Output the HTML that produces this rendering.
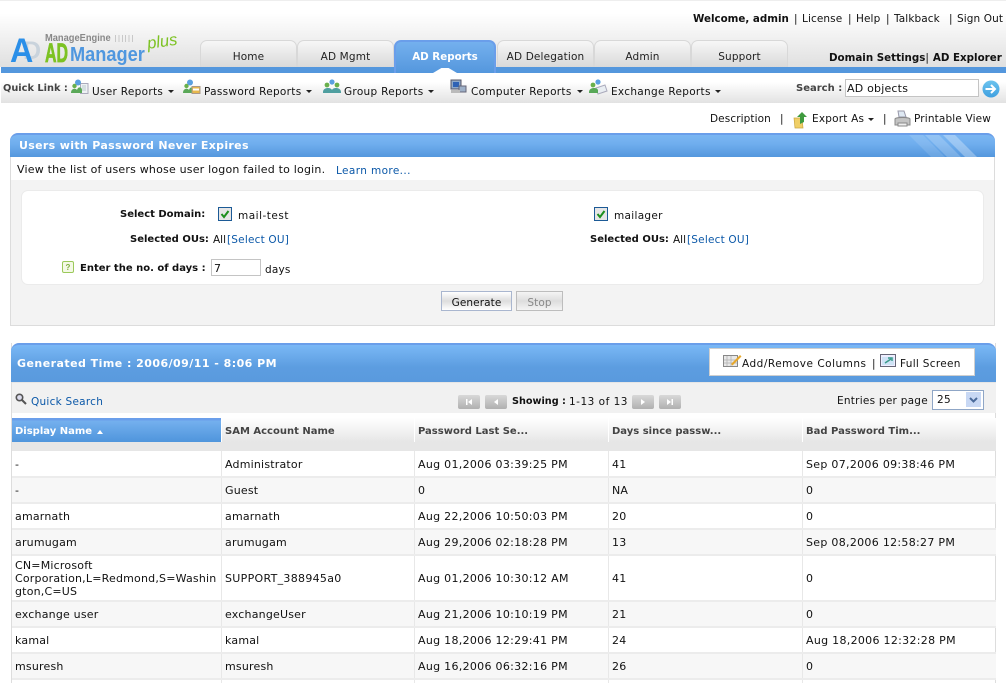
<!DOCTYPE html>
<html><head><meta charset="utf-8"><title>ADManager Plus</title>
<style>
html,body{margin:0;padding:0;background:#fff;width:1006px;height:683px;overflow:hidden}
body{position:relative;font-family:"DejaVu Sans","Liberation Sans",sans-serif;font-size:11px;letter-spacing:.2px;color:#111}
.a{position:absolute}
.t{position:absolute;white-space:nowrap;line-height:14px;margin-top:1px}
.s{font-size:10.5px;letter-spacing:.3px}
.d{letter-spacing:.3px}
b,.b{font-weight:bold;font-size:10px;letter-spacing:0}
.lg{font-family:"Liberation Sans",sans-serif;font-weight:bold;letter-spacing:0;position:absolute;white-space:nowrap;transform-origin:0 0}
.l{color:#0b58a8}
.tab{position:absolute;top:40px;height:27px;box-sizing:border-box;border:1px solid #d8d8d8;border-bottom:0;border-radius:7px 7px 0 0;background:linear-gradient(#f7f7f7,#d9d9d9);text-align:center;line-height:33px;color:#222;font-size:10.5px;letter-spacing:.15px}
.tab.on{background:linear-gradient(#74b0ee,#5497dd);border:2px solid #6a9eea;border-bottom:0;color:#fff;font-weight:bold;font-size:10.3px;letter-spacing:0;line-height:31px;height:33px}
.ar{position:absolute;width:0;height:0;border-left:3px solid transparent;border-right:3px solid transparent;border-top:3px solid #222}
.th{position:absolute;top:418px;height:24px;background:linear-gradient(#fff,#e6e6e6);color:#444;font-weight:bold;font-size:10px;letter-spacing:0;line-height:27px;padding-left:3px;box-sizing:border-box;white-space:nowrap}
.pg{position:absolute;top:395px;width:22px;height:14px;border-radius:2px;background:linear-gradient(#d8d8d8,#b0b0b0)}
.hl{position:absolute;left:12px;width:984px;height:2px;background:#ececec}
.vl{position:absolute;top:451px;width:1px;height:232px;background:#e8e8e8}
.row{position:absolute;left:12px;width:984px;background:#f7f7f7}
.cb{position:absolute;width:12px;height:12px;border:1px solid #1c5a96;background:#e6e6e6}
</style></head><body>

<div class="a" style="left:0;top:0;width:1006px;height:67px;background:linear-gradient(#fff 20%,#e0e0e0)"></div>
<div class="a" style="left:0;top:0;width:1006px;height:1px;background:#eee"></div>
<div class="a" style="left:1px;top:67px;width:1005px;height:6px;background:#5497dd"></div>
<div class="a" style="left:1px;top:73px;width:1005px;height:30px;background:linear-gradient(#fff 30%,#e2e2e2)"></div>

<!-- logo -->
<div class="lg" style="left:45px;top:32px;line-height:14px;font-size:10px;color:#888;transform:scaleX(.93)">ManageEngine</div>
<div class="a" style="left:115px;top:35px;width:20px;height:7px;background:repeating-linear-gradient(90deg,#c8c8c8 0,#c8c8c8 1px,transparent 1px,transparent 3.4px)"></div>
<div class="lg" style="left:23px;top:40px;line-height:22px;font-size:25px;color:#c9d3dc">D</div>
<div class="lg" style="left:10px;top:39px;line-height:24px;font-size:34px;color:#2b8fe8;transform:scaleX(.95)">A</div>
<div class="lg" style="left:45px;top:42px;line-height:22px;font-size:27px;color:#7cc222;transform:scaleX(.59);-webkit-text-stroke:.8px #7cc222">AD</div>
<div class="lg" style="left:70px;top:44px;line-height:22px;font-size:20px;color:#4f97df;transform:scaleX(.91)">Manager</div>
<div class="lg" style="left:146px;top:35px;line-height:18px;font-size:16.5px;font-weight:normal;font-style:italic;color:#7cc222;transform:rotate(-8deg)">plus</div>

<!-- tabs -->
<div class="tab" style="left:200px;width:97px">Home</div>
<div class="tab" style="left:297px;width:97px">AD Mgmt</div>
<div class="tab" style="left:594px;width:97px">Admin</div>
<div class="tab" style="left:691px;width:97px">Support</div>
<div class="tab" style="left:497px;width:97px">AD Delegation</div>
<div class="tab on" style="left:394px;width:102px">AD Reports</div>
<div class="a" style="left:433px;top:68px;width:24px;height:5px;background:#fff;clip-path:polygon(0 100%,35% 0,65% 0,100% 100%)"></div>

<div class="t" style="left:693px;top:11px"><b style="font-size:10.3px">Welcome, admin</b></div>
<div class="t s" style="left:794px;top:11px">|</div>
<div class="t s" style="left:802px;top:11px;letter-spacing:.1px">License</div>
<div class="t s" style="left:848px;top:11px">|</div>
<div class="t s" style="left:856px;top:11px;letter-spacing:.1px">Help</div>
<div class="t s" style="left:886px;top:11px">|</div>
<div class="t s" style="left:894px;top:11px;letter-spacing:.1px">Talkback</div>
<div class="t s" style="left:949px;top:11px">|</div>
<div class="t s" style="left:957px;top:11px;letter-spacing:.1px">Sign Out</div>
<div class="t" style="left:829px;top:50px"><b style="font-size:10.3px">Domain Settings</b><span class="s">|</span> <b style="font-size:10.3px">AD Explorer</b></div>

<!-- quick links -->
<div class="t b" style="left:3px;top:81px;color:#444;font-size:9.8px">Quick Link :</div>
<svg class="a" style="left:71px;top:79px" width="18" height="16" viewBox="0 0 18 16"><rect x="9.500" y="4.500" width="7.500" height="10" fill="#eef1f4" stroke="#aab"/><path d="M11 7h4M11 9h4M11 11h4" stroke="#bcc"/><circle cx="7" cy="3.500" r="3" fill="#5aa0e0"/><circle cx="3.500" cy="7" r="2.200" fill="#6ab04c"/><path d="M0 14c0-5 5-5 6-3 1-4 5-3 5 0v3z" fill="#5aa858"/></svg>
<div class="t s" style="left:92px;top:84px">User Reports</div><div class="ar" style="left:168px;top:90px"></div>
<svg class="a" style="left:183px;top:79px" width="18" height="16" viewBox="0 0 18 16"><circle cx="7" cy="3.500" r="3" fill="#5aa0e0"/><circle cx="3.500" cy="7" r="2.200" fill="#6ab04c"/><path d="M0 14c0-5 5-5 6-3 1-4 5-3 5 0v3z" fill="#5aa858"/><rect x="9" y="7.500" width="8" height="7" fill="#e8b84c" stroke="#a98"/><rect x="10" y="9.500" width="6" height="2" fill="#fff"/></svg>
<div class="t s" style="left:204px;top:84px">Password Reports</div><div class="ar" style="left:306px;top:90px"></div>
<svg class="a" style="left:323px;top:79px" width="18" height="15" viewBox="0 0 18 15"><circle cx="9" cy="3" r="2.600" fill="#5aa0e0"/><circle cx="4" cy="6" r="2.400" fill="#6ab04c"/><circle cx="14" cy="6" r="2.400" fill="#6ab04c"/><path d="M0 13c0-5 8-5 9-2 1-3 9-3 9 2v1H0z" fill="#4f9fa0"/></svg>
<div class="t s" style="left:344px;top:84px">Group Reports</div><div class="ar" style="left:428px;top:90px"></div>
<svg class="a" style="left:450px;top:79px" width="17" height="16" viewBox="0 0 17 16"><rect x="1" y="1" width="10" height="9" fill="#8fa9c9" stroke="#556"/><rect x="3" y="3" width="6" height="5" fill="#2f62b5"/><rect x="9" y="7" width="7" height="6" fill="#9db0c8" stroke="#667"/><rect x="1" y="11" width="9" height="3" fill="#bbb"/></svg>
<div class="t s" style="left:471px;top:84px">Computer Reports</div><div class="ar" style="left:577px;top:90px"></div>
<svg class="a" style="left:589px;top:79px" width="19" height="16" viewBox="0 0 19 16"><path d="M7 9l9-3 2 6-9 3z" fill="#e8edf2" stroke="#aab"/><circle cx="9" cy="3" r="2.600" fill="#5aa0e0"/><circle cx="4" cy="6" r="2.400" fill="#6ab04c"/><path d="M0 13c0-5 8-5 9-2v3H0z" fill="#58a858"/></svg>
<div class="t s" style="left:611px;top:84px">Exchange Reports</div><div class="ar" style="left:715px;top:90px"></div>

<div class="t b" style="left:796px;top:81px;color:#444;">Search :</div>
<div class="a" style="left:845px;top:79px;width:132px;height:16px;border:1px solid #c4c4c4;background:#fff;line-height:17px;text-indent:1px">AD objects</div>
<svg class="a" style="left:982px;top:80px" width="18" height="18" viewBox="0 0 18 18"><defs><linearGradient id="g" x1="0" y1="0" x2="0" y2="1"><stop offset="0" stop-color="#6cc3ee"/><stop offset="1" stop-color="#3fa0e0"/></linearGradient></defs><circle cx="9" cy="9" r="8.500" fill="url(#g)"/><path d="M3.500 9h9M9 5l4 4-4 4" fill="none" stroke="#fff" stroke-width="2"/></svg>

<!-- actions -->
<div class="t s" style="left:710px;top:111px;letter-spacing:.1px">Description</div>
<div class="t s" style="left:780px;top:111px">|</div>
<svg class="a" style="left:793px;top:111px" width="15" height="18" viewBox="0 0 15 18"><path d="M1 7h8l1 10H2z" fill="#f0cf66" stroke="#c9a640" stroke-width=".7"/><path d="M7 13V6H4l5-5 5 5h-3v5z" fill="#3f9b3f"/></svg>
<div class="t s" style="left:812px;top:111px;letter-spacing:.2px">Export As</div><div class="ar" style="left:868px;top:118px"></div>
<div class="t s" style="left:883px;top:111px">|</div>
<svg class="a" style="left:894px;top:110px" width="17" height="18" viewBox="0 0 17 18"><path d="M4 1h6l2 6H5z" fill="#dfe9f3" stroke="#99a"/><path d="M1 9c0-2 15-2 15 0v6H1z" fill="#c4c4c4" stroke="#888"/><rect x="4" y="13" width="9" height="3" fill="#eee" stroke="#888"/></svg>
<div class="t s" style="left:914px;top:111px;letter-spacing:.15px">Printable View</div>

<!-- panel -->
<div class="a" style="left:10px;top:133px;width:985px;height:193px;box-sizing:border-box;border:1px solid #dcdcdc;border-top:0;background:#f3f3f3;border-radius:8px 8px 0 0"></div>
<div class="a" style="left:10px;top:133px;width:985px;height:24px;box-sizing:border-box;border-top:2px solid #6a9eea;border-radius:8px 8px 0 0;background:linear-gradient(#7ab6f2 0,#70aeee 40%,#5497dd 100%);overflow:hidden">
<svg class="a" style="right:-12px;top:-2px" width="100" height="24" viewBox="0 0 100 24"><path d="M2 2h14l22 22H24z" fill="#fff" opacity=".12"/><path d="M18 2h14l22 22H40z" fill="#fff" opacity=".2"/><path d="M36 2h12l22 22H58z" fill="#fff" opacity=".3"/></svg></div>
<div class="a" style="left:11px;top:157px;width:983px;height:23px;background:#fff"></div>
<div class="t b" style="left:19px;top:138px;color:#fff;font-size:11px;letter-spacing:.33px">Users with Password Never Expires</div>
<div class="t" style="left:17px;top:162px">View the list of users whose user logon failed to login.</div>
<div class="t s l" style="left:336px;top:163px;letter-spacing:.38px">Learn more...</div>
<div class="a" style="left:21px;top:190px;width:963px;height:95px;box-sizing:border-box;background:#fff;border:1px solid #ebebeb;border-radius:7px"></div>

<div class="t b" style="left:120px;top:207px">Select Domain:</div>
<div class="cb" style="left:218px;top:207px"></div>
<svg class="a" style="left:219px;top:208px" width="12" height="12" viewBox="0 0 12 12"><path d="M2.500 6l2.500 3 4.500-6" fill="none" stroke="#1d8f1d" stroke-width="2"/></svg>
<div class="t s" style="left:238px;top:208px;letter-spacing:.5px">mail-test</div>
<div class="t b" style="left:130px;top:232px">Selected OUs:</div>
<div class="t s" style="left:213px;top:232px;letter-spacing:0">All</div>
<div class="t s l" style="left:227px;top:232px;letter-spacing:.2px">[Select OU]</div>
<svg class="a" style="left:62px;top:261px" width="12" height="12" viewBox="0 0 12 12"><rect x=".5" y=".5" width="11" height="11" rx="1.500" fill="#f4f9e6" stroke="#9bc95a"/><text x="6" y="9" font-size="8" font-weight="bold" text-anchor="middle" fill="#7fae3e" font-family="Liberation Sans">?</text></svg>
<div class="t b" style="left:80px;top:261px">Enter the no. of days :</div>
<div class="a" style="left:211px;top:259px;width:48px;height:15px;border:1px solid #c4c4c4;background:#fff;line-height:17px;text-indent:2px">7</div>
<div class="t s" style="left:265px;top:262px;letter-spacing:.2px">days</div>

<div class="cb" style="left:594px;top:207px"></div>
<svg class="a" style="left:595px;top:208px" width="12" height="12" viewBox="0 0 12 12"><path d="M2.500 6l2.500 3 4.500-6" fill="none" stroke="#1d8f1d" stroke-width="2"/></svg>
<div class="t s" style="left:614px;top:208px">mailager</div>
<div class="t b" style="left:590px;top:232px">Selected OUs:</div>
<div class="t s" style="left:673px;top:232px;letter-spacing:0">All</div>
<div class="t s l" style="left:687px;top:232px;letter-spacing:.2px">[Select OU]</div>

<div class="a s" style="left:441px;top:291px;width:69px;height:18px;border:1px solid #a9b6cf;background:linear-gradient(#fff,#ddd 50%,#fff);text-align:center;line-height:22px;letter-spacing:.1px">Generate</div>
<div class="a s" style="left:516px;top:291px;width:45px;height:18px;border:1px solid #bdbdbd;background:linear-gradient(#f4f4f4,#ddd 50%,#f4f4f4);text-align:center;line-height:22px;color:#888;letter-spacing:.1px">Stop</div>

<!-- report -->
<div class="a" style="left:11px;top:343px;width:985px;height:340px;box-sizing:border-box;border-left:1px solid #ddd;border-right:1px solid #ddd;background:#fff"></div>
<div class="a" style="left:11px;top:343px;width:985px;height:39px;box-sizing:border-box;border-top:2px solid #6a9eea;border-radius:8px 8px 0 0;background:linear-gradient(#7ab8f6,#5c9de0 60%,#5a9ade)"></div>
<div class="t b" style="left:17px;top:356px;color:#fff;font-size:11px;letter-spacing:.46px">Generated Time : 2006/09/11 - 8:06 PM</div>
<div class="a" style="left:709px;top:348px;width:266px;height:28px;box-sizing:border-box;border:1px solid #cfcfcf;background:#fff"></div>
<svg class="a" style="left:723px;top:353px" width="19" height="15" viewBox="0 0 19 15"><rect x=".5" y="2.500" width="14" height="11" fill="#e8e8e8" stroke="#888"/><path d="M4 3v10M8 3v10M1 7h13M1 10h13" stroke="#bbb"/><path d="M8 11l9-9 1.500 1.500-9 9z" fill="#e7a82b"/></svg>
<div class="t s" style="left:742px;top:356px;letter-spacing:.5px">Add/Remove Columns</div>
<div class="t s" style="left:872px;top:356px">|</div>
<svg class="a" style="left:880px;top:354px" width="17" height="14" viewBox="0 0 17 14"><rect x=".5" y=".5" width="15" height="12" fill="#eef" stroke="#667"/><rect x="2" y="3" width="12" height="8" fill="#cfe3f6"/><path d="M5 9l6-4M8 4h4v3" fill="none" stroke="#3b9a8c" stroke-width="1.500"/></svg>
<div class="t s" style="left:900px;top:356px">Full Screen</div>

<div class="a" style="left:12px;top:382px;width:984px;height:31px;background:#f1f1f1;border-top:1px solid #e6e6e6;box-sizing:border-box"></div>
<svg class="a" style="left:15px;top:393px" width="12" height="12" viewBox="0 0 12 12"><circle cx="4.500" cy="4.500" r="3.200" fill="#dde" stroke="#555" stroke-width="1.600"/><path d="M7 7l4 4" stroke="#555" stroke-width="2"/></svg>
<div class="t s l" style="left:31px;top:394px;letter-spacing:.25px">Quick Search</div>
<div class="pg" style="left:458px"><svg width="22" height="14" viewBox="0 0 22 14"><path d="M8 4h1.500v6H8zM14 4v6l-4-3z" fill="#fff"/></svg></div>
<div class="pg" style="left:485px"><svg width="22" height="14" viewBox="0 0 22 14"><path d="M13 4v6l-4-3z" fill="#fff"/></svg></div>
<div class="t b" style="left:512px;top:394px;font-size:9.7px">Showing :</div>
<div class="t s" style="left:569px;top:394px;letter-spacing:.5px">1-13 of 13</div>
<div class="pg" style="left:632px"><svg width="22" height="14" viewBox="0 0 22 14"><path d="M9 4v6l4-3z" fill="#fff"/></svg></div>
<div class="pg" style="left:659px"><svg width="22" height="14" viewBox="0 0 22 14"><path d="M8 4v6l4-3zM12.500 4H14v6h-1.500z" fill="#fff"/></svg></div>
<div class="t s" style="left:837px;top:393px;letter-spacing:.25px">Entries per page</div>
<div class="a s" style="left:932px;top:390px;width:50px;height:18px;border:1px solid #8fa6c6;background:#fff;line-height:19px;text-indent:4px">25</div>
<div class="a" style="left:966px;top:392px;width:15px;height:15px;background:#c8d8f4"></div>
<svg class="a" style="left:966px;top:392px" width="15" height="15" viewBox="0 0 15 15"><path d="M4 6l3.500 3.500L11 6" fill="none" stroke="#4a6a9a" stroke-width="2"/></svg>

<!-- table -->
<div class="th" style="left:12px;width:209px;background:linear-gradient(#6a9eea 0,#6a9eea 2px,#74b0ee 3px,#4f95dc);color:#fff">Display Name</div>
<div class="a" style="left:97px;top:430px;width:0;height:0;border-left:3px solid transparent;border-right:3px solid transparent;border-bottom:4px solid #fff"></div>
<div class="th" style="left:222px;width:192px">SAM Account Name</div>
<div class="th" style="left:415px;width:193px">Password Last Se...</div>
<div class="th" style="left:609px;width:193px">Days since passw...</div>
<div class="th" style="left:803px;width:193px">Bad Password Tim...</div>
<div class="a" style="left:12px;top:442px;width:984px;height:9px;background:#e6e6e6"></div>

<div class="row" style="top:477px;height:26px"></div>
<div class="row" style="top:529px;height:26px"></div>
<div class="row" style="top:601px;height:26px"></div>
<div class="row" style="top:653px;height:26px"></div>

<div class="vl" style="left:221px"></div><div class="vl" style="left:414px"></div><div class="vl" style="left:608px"></div><div class="vl" style="left:802px"></div>
<div class="hl" style="top:476px"></div><div class="hl" style="top:502px"></div><div class="hl" style="top:528px"></div><div class="hl" style="top:554px"></div><div class="hl" style="top:600px"></div><div class="hl" style="top:626px"></div><div class="hl" style="top:652px"></div><div class="hl" style="top:678px"></div>

<div class="t" style="left:15px;top:457px">-</div><div class="t" style="left:225px;top:457px">Administrator</div><div class="t d" style="left:418px;top:457px">Aug 01,2006 03:39:25 PM</div><div class="t" style="left:612px;top:457px">41</div><div class="t d" style="left:806px;top:457px">Sep 07,2006 09:38:46 PM</div>
<div class="t" style="left:15px;top:483px">-</div><div class="t" style="left:225px;top:483px">Guest</div><div class="t" style="left:418px;top:483px">0</div><div class="t" style="left:612px;top:483px">NA</div><div class="t" style="left:806px;top:483px">0</div>
<div class="t" style="left:15px;top:509px">amarnath</div><div class="t" style="left:225px;top:509px">amarnath</div><div class="t d" style="left:418px;top:509px">Aug 22,2006 10:50:03 PM</div><div class="t" style="left:612px;top:509px">20</div><div class="t" style="left:806px;top:509px">0</div>
<div class="t" style="left:15px;top:535px">arumugam</div><div class="t" style="left:225px;top:535px">arumugam</div><div class="t d" style="left:418px;top:535px">Aug 29,2006 02:18:28 PM</div><div class="t" style="left:612px;top:535px">13</div><div class="t d" style="left:806px;top:535px">Sep 08,2006 12:58:27 PM</div>
<div class="t" style="left:15px;top:558px;line-height:13px">CN=Microsoft<br>Corporation,L=Redmond,S=Washin<br>gton,C=US</div><div class="t d" style="left:225px;top:571px">SUPPORT_388945a0</div><div class="t d" style="left:418px;top:571px">Aug 01,2006 10:30:12 AM</div><div class="t" style="left:612px;top:571px">41</div><div class="t" style="left:806px;top:571px">0</div>
<div class="t" style="left:15px;top:607px">exchange user</div><div class="t" style="left:225px;top:607px">exchangeUser</div><div class="t d" style="left:418px;top:607px">Aug 21,2006 10:10:19 PM</div><div class="t" style="left:612px;top:607px">21</div><div class="t" style="left:806px;top:607px">0</div>
<div class="t" style="left:15px;top:633px">kamal</div><div class="t" style="left:225px;top:633px">kamal</div><div class="t d" style="left:418px;top:633px">Aug 18,2006 12:29:41 PM</div><div class="t" style="left:612px;top:633px">24</div><div class="t d" style="left:806px;top:633px">Aug 18,2006 12:32:28 PM</div>
<div class="t" style="left:15px;top:659px">msuresh</div><div class="t" style="left:225px;top:659px">msuresh</div><div class="t d" style="left:418px;top:659px">Aug 16,2006 06:32:16 PM</div><div class="t" style="left:612px;top:659px">26</div><div class="t" style="left:806px;top:659px">0</div>
</body></html>
